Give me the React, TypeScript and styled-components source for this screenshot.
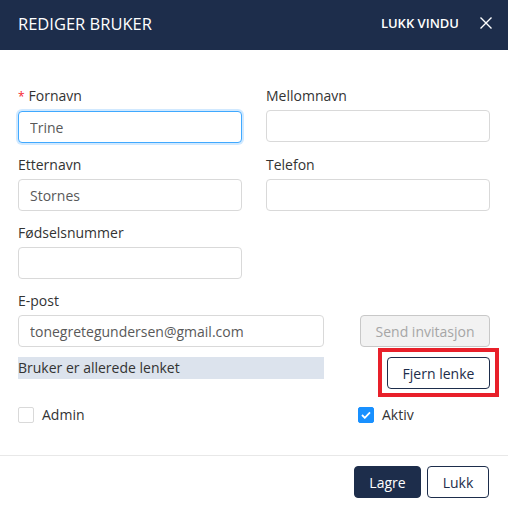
import styled, { createGlobalStyle } from 'styled-components';

const GlobalStyle = createGlobalStyle`
  * { box-sizing: border-box; }
  body { margin: 0; background: #fff; font-family: 'Open Sans', 'Noto Sans', sans-serif; color: #333; }
`;

const Modal = styled.div` width: 508px; height: 508px; display: flex; flex-direction: column; background: #fff; `;

const Header = styled.header` height: 50px; flex-shrink: 0; padding: 0 15px 4px 18px; background: #1d2d4b; color: #fff; display: flex; align-items: center; justify-content: space-between; `;
const Title = styled.h1` margin: 0; font-size: 16.5px; font-weight: 400; `;
const CloseGroup = styled.button` display: flex; align-items: center; gap: 20px; background: none; border: 0; padding: 0; color: #fff; font-family: inherit; font-size: 13px; font-weight: 600; cursor: pointer; `;

const Body = styled.div` flex: 1; padding: 36px 18px 0; `;
const Grid = styled.div` display: grid; grid-template-columns: 224px 224px; column-gap: 24px; row-gap: 12px; `;
const Field = styled.div` display: flex; flex-direction: column; `;
const Label = styled.label` font-size: 14px; line-height: 20px; margin-bottom: 4px; color: #333; `;
const Required = styled.span` color: #f5222d; margin-right: 4px; font-size: 12px; `;
const Input = styled.input<{ $focused?: boolean; $width?: number }>`
  width: ${({ $width }) => ($width ? `${$width}px` : '100%')};
  height: 32px; padding: 0 11px; border-radius: 4px; font-family: inherit; font-size: 14px; color: #595959; background: #fff; outline: none;
  border: 1px solid ${({ $focused }) => ($focused ? '#40a9ff' : '#d9d9d9')};
  box-shadow: ${({ $focused }) => ($focused ? '0 0 0 2px rgba(24,144,255,0.2)' : 'none')};
`;

const Row = styled.div<{ $mt: number }>` display: flex; justify-content: space-between; align-items: flex-start; margin-top: ${({ $mt }) => $mt}px; `;
const EmailField = styled(Field)` margin-top: 12px; `;

const Button = styled.button<{ $variant: 'primary' | 'outline' | 'disabled'; $width: number }>`
  width: ${({ $width }) => $width}px; height: 32px; padding: 0; border-radius: 4px; font-family: inherit; font-size: 14px; cursor: pointer;
  background: ${({ $variant }) => ($variant === 'primary' ? '#1d2d4b' : $variant === 'disabled' ? '#f2f2f2' : '#fff')};
  color: ${({ $variant }) => ($variant === 'primary' ? '#fff' : $variant === 'disabled' ? '#a6a6a6' : '#1d2d4b')};
  border: 1px solid ${({ $variant }) => ($variant === 'disabled' ? '#c8c8c8' : '#1d2d4b')};
`;
const Notice = styled.div` width: 306px; height: 22px; line-height: 22px; background: #dce3ed; font-size: 14px; color: #333; `;
const Highlight = styled.span`
  position: relative; display: inline-flex;
  &::after { content: ''; position: absolute; inset: -9px -9px -8px -9px; border: 4px solid #e8202a; pointer-events: none; }
`;

const Checks = styled.div` display: grid; grid-template-columns: 340px 1fr; margin-top: 16px; `;
const Check = styled.label` display: flex; align-items: center; gap: 8px; font-size: 14px; color: #333; `;
const Box = styled.span<{ $checked?: boolean }>`
  width: 16px; height: 16px; border-radius: 2px; display: inline-flex; align-items: center; justify-content: center;
  border: 1px solid ${({ $checked }) => ($checked ? '#1890ff' : '#d9d9d9')};
  background: ${({ $checked }) => ($checked ? '#1890ff' : '#fff')};
`;

const Footer = styled.footer` border-top: 1px solid #e8e8e8; padding: 10px 19px 10px; display: flex; justify-content: flex-end; gap: 6px; `;

export default function App() {
  return (
    <Modal>
      <GlobalStyle />
      <Header>
        <Title>REDIGER BRUKER</Title>
        <CloseGroup>
          LUKK VINDU
          <svg width="14" height="12" viewBox="0 0 14 12"><path d="M1.5 0.5l11 11M12.5 0.5l-11 11" stroke="#fff" strokeWidth="1.4" /></svg>
        </CloseGroup>
      </Header>
      <Body>
        <Grid>
          <Field><Label><Required>*</Required>Fornavn</Label><Input $focused defaultValue="Trine" /></Field>
          <Field><Label>Mellomnavn</Label><Input /></Field>
          <Field><Label>Etternavn</Label><Input defaultValue="Stornes" /></Field>
          <Field><Label>Telefon</Label><Input /></Field>
          <Field><Label>Fødselsnummer</Label><Input /></Field>
        </Grid>
        <EmailField>
          <Label>E-post</Label>
          <Row $mt={0}>
            <Input $width={306} defaultValue="tonegretegundersen@gmail.com" />
            <Button $variant="disabled" $width={130} disabled>Send invitasjon</Button>
          </Row>
        </EmailField>
        <Row $mt={10}>
          <Notice>Bruker er allerede lenket</Notice>
          <Highlight><Button $variant="outline" $width={103}>Fjern lenke</Button></Highlight>
        </Row>
        <Checks>
          <Check><Box />Admin</Check>
          <Check>
            <Box $checked>
              <svg width="10" height="8" viewBox="0 0 10 8"><path d="M1 4l2.8 2.8L9 1.3" fill="none" stroke="#fff" strokeWidth="1.8" /></svg>
            </Box>
            Aktiv
          </Check>
        </Checks>
      </Body>
      <Footer>
        <Button $variant="primary" $width={67}>Lagre</Button>
        <Button $variant="outline" $width={62}>Lukk</Button>
      </Footer>
    </Modal>
  );
}
